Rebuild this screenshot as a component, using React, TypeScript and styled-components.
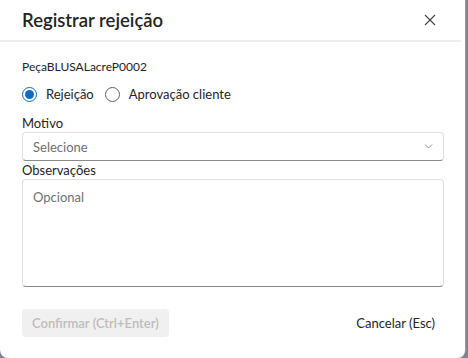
import styled, { createGlobalStyle } from "styled-components";

const GlobalStyle = createGlobalStyle`
  html, body {
    margin: 0;
    padding: 0;
    background: #7d8591;
  }
  body {
    font-family: "Segoe UI", Lato, "Open Sans", sans-serif;
    width: 468px;
    height: 358px;
    overflow: hidden;
  }
`;

const App = () => {
  return (
    <>
      <GlobalStyle />
      <Dialog>
        <Header>
          <Title>Registrar rejeição</Title>
          <CloseButton aria-label="Fechar">
            <svg width="12" height="12" viewBox="0 0 12 12">
              <path d="M1 1 L11 11 M11 1 L1 11" stroke="#424242" strokeWidth="1.1" />
            </svg>
          </CloseButton>
        </Header>
        <Body>
          <ItemText>PeçaBLUSALacreP0002</ItemText>
          <RadioGroup>
            <RadioOption>
              <Radio checked />
              Rejeição
            </RadioOption>
            <RadioOption>
              <Radio />
              Aprovação cliente
            </RadioOption>
          </RadioGroup>
          <Label>Motivo</Label>
          <Select>
            <Placeholder>Selecione</Placeholder>
            <svg width="9" height="5" viewBox="0 0 9 5">
              <path d="M1 0.5 L4.5 4 L8 0.5" stroke="#8a8a8a" strokeWidth="1" fill="none" />
            </svg>
          </Select>
          <Label>Observações</Label>
          <TextArea>
            <Placeholder>Opcional</Placeholder>
          </TextArea>
        </Body>
        <Footer>
          <PrimaryButton disabled>Confirmar (Ctrl+Enter)</PrimaryButton>
          <TextButton>Cancelar (Esc)</TextButton>
        </Footer>
      </Dialog>
    </>
  );
};

const Dialog = styled.div`
  width: 466px;
  height: 358px;
  background: #ffffff;
  border-right: 1px solid #9a9a9a;
  border-bottom-right-radius: 8px;
  border-bottom-left-radius: 8px;
  box-sizing: border-box;
  display: flex;
  flex-direction: column;
  color: #242424;
`;

const Header = styled.div`
  height: 40px;
  border-bottom: 2px solid #efefef;
  display: flex;
  align-items: center;
  justify-content: space-between;
  padding: 0 24px 0 22px;
  margin-right: 4px;
`;

const Title = styled.h1`
  margin: 0;
  font-size: 18.5px;
  font-weight: 600;
  color: #242424;
`;

const CloseButton = styled.button`
  border: none;
  background: transparent;
  padding: 0;
  width: 14px;
  height: 14px;
  display: flex;
  align-items: center;
  justify-content: center;
`;

const Body = styled.div`
  padding: 16px 21px 0 22px;
  display: flex;
  flex-direction: column;
`;

const ItemText = styled.div`
  font-size: 12px;
  line-height: 18px;
`;

const RadioGroup = styled.div`
  display: flex;
  gap: 11px;
  margin: 9px 0 11px;
`;

const RadioOption = styled.label`
  display: flex;
  align-items: center;
  gap: 9px;
  font-size: 13px;
  line-height: 18px;
`;

const Radio = styled.span<{ checked?: boolean }>`
  width: 15px;
  height: 15px;
  border-radius: 50%;
  border: 1px solid ${(p) => (p.checked ? "#0f6cbd" : "#616161")};
  box-sizing: border-box;
  display: flex;
  align-items: center;
  justify-content: center;
  &::after {
    content: "";
    width: 9px;
    height: 9px;
    border-radius: 50%;
    background: ${(p) => (p.checked ? "#0f6cbd" : "transparent")};
  }
`;

const Label = styled.div`
  font-size: 13px;
  line-height: 18px;
`;

const Select = styled.div`
  height: 29px;
  box-sizing: border-box;
  border: 1px solid #e0e0e0;
  border-bottom-color: #8a8a8a;
  border-radius: 4px;
  display: flex;
  align-items: center;
  justify-content: space-between;
  padding: 0 10px 0 10px;
`;

const Placeholder = styled.span`
  font-size: 13px;
  color: #707070;
`;

const TextArea = styled.div`
  height: 108px;
  box-sizing: border-box;
  border: 1px solid #e0e0e0;
  border-bottom-color: #8a8a8a;
  border-radius: 4px;
  padding: 6px 10px;
`;

const Footer = styled.div`
  display: flex;
  align-items: center;
  justify-content: space-between;
  padding: 22px 30px 0 22px;
`;

const PrimaryButton = styled.button`
  height: 28px;
  padding: 0 10px;
  border: none;
  border-radius: 4px;
  background: #f0f0f0;
  color: #bdbdbd;
  font-family: inherit;
  font-size: 13px;
  font-weight: 600;
`;

const TextButton = styled.button`
  border: none;
  background: transparent;
  padding: 0;
  font-family: inherit;
  font-size: 13px;
  color: #242424;
`;

export default App;
